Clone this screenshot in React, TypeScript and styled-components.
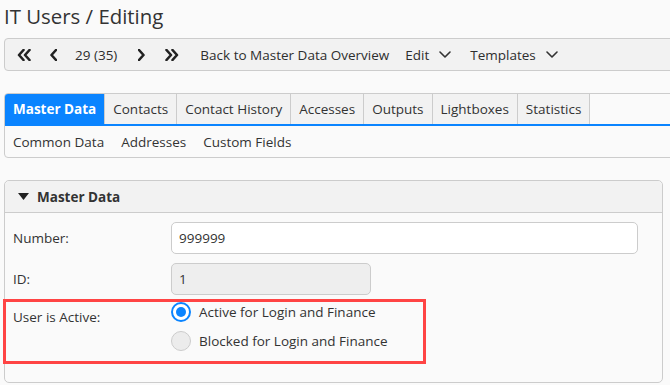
import styled, { createGlobalStyle } from "styled-components";

const GlobalStyle = createGlobalStyle`
	body {
		margin: 0;
		background: #fafafa;
		font-family: "Open Sans", "Noto Sans", sans-serif;
		color: #333;
		overflow: hidden;
	}
`;

const Page = styled.div`
	width: 670px;
	height: 385px;
	overflow: hidden;
	padding-left: 4px;
	box-sizing: border-box;
	font-size: 13.5px;
`;

const Title = styled.h1`
	margin: 0;
	height: 38px;
	font-size: 20.4px;
	font-weight: 400;
	line-height: 32px;
	color: #333;
`;

const Toolbar = styled.div`
	display: flex;
	align-items: center;
	height: 33px;
	box-sizing: border-box;
	margin-right: -12px;
	padding-left: 12px;
	background: #f2f2f2;
	border: 1px solid #ccc;
	border-radius: 4px;
`;

const ToolButton = styled.span<{ gap?: number }>`
	display: flex;
	align-items: center;
	gap: 10px;
	margin-right: ${(props) => props.gap ?? 16}px;
	white-space: nowrap;
	color: #2e2e2e;
`;

const TabBox = styled.div`
	margin-top: 22px;
	margin-right: -12px;
	border: 1px solid #ccc;
	border-radius: 4px;
`;

const TabRow = styled.div`
	display: flex;
	border-bottom: 2px solid #0a84ff;
`;

const Tab = styled.span<{ active?: boolean }>`
	height: 30px;
	line-height: 30px;
	padding: 0 8px;
	box-sizing: border-box;
	white-space: nowrap;
	background: ${(props) => (props.active ? "#0a84ff" : "#f2f2f2")};
	color: ${(props) => (props.active ? "#fff" : "#333")};
	font-weight: ${(props) => (props.active ? 700 : 400)};
	border-right: 1px solid #ccc;
	&:first-child {
		border-top-left-radius: 3px;
	}
`;

const SubTabRow = styled.div`
	display: flex;
	gap: 17px;
	height: 31px;
	align-items: center;
	padding-left: 8px;
`;

const Panel = styled.section`
	margin-top: 22px;
	margin-right: 7px;
	height: 203px;
	box-sizing: border-box;
	border: 1px solid #ccc;
	border-radius: 5px;
`;

const PanelHeader = styled.div`
	display: flex;
	align-items: center;
	gap: 8px;
	height: 31px;
	padding-left: 13px;
	background: #f2f2f2;
	border-bottom: 1px solid #ccc;
	border-radius: 5px 5px 0 0;
	font-weight: 700;
`;

const Form = styled.div`
	padding: 4px 24px 0 8px;
`;

const Row = styled.div<{ highlighted?: boolean }>`
	display: grid;
	grid-template-columns: 158px 1fr;
	align-items: center;
	min-height: 41px;
	${(props) =>
		props.highlighted &&
		`
		width: 423px;
		margin-left: -10px;
		padding: 0 0 10px 7px;
		border: 3px solid #ff4444;
		box-sizing: border-box;
		align-items: start;
	`}
`;

const Label = styled.span<{ top?: number }>`
	padding-top: ${(props) => props.top ?? 0}px;
`;

const Input = styled.div<{ disabled?: boolean; width?: number }>`
	height: 32px;
	box-sizing: border-box;
	width: ${(props) => (props.width ? `${props.width}px` : "100%")};
	padding-left: 7px;
	line-height: 30px;
	background: ${(props) => (props.disabled ? "#eee" : "#fff")};
	border: 1px solid #ccc;
	border-radius: 5px;
`;

const RadioGroup = styled.div`
	display: flex;
	flex-direction: column;
	gap: 9px;
`;

const RadioLine = styled.label`
	display: flex;
	align-items: center;
	gap: 8px;
	height: 20px;
`;

const Radio = styled.span<{ checked?: boolean }>`
	width: 20px;
	height: 20px;
	box-sizing: border-box;
	border-radius: 50%;
	border: ${(props) => (props.checked ? "2px solid #0a84ff" : "1px solid #ccc")};
	background: ${(props) => (props.checked ? "#fff" : "#ececec")};
	display: flex;
	align-items: center;
	justify-content: center;
	&::after {
		content: "";
		display: ${(props) => (props.checked ? "block" : "none")};
		width: 10px;
		height: 10px;
		border-radius: 50%;
		background: #0a84ff;
	}
`;

const Chevron = ({ dir, double }: { dir: "left" | "right"; double?: boolean }) => {
	const w = double ? 14 : 7;
	const paths =
		dir === "left"
			? double
				? ["M6.5 1 L2 6 L6.5 11", "M12.5 1 L8 6 L12.5 11"]
				: ["M6 1 L1.5 6 L6 11"]
			: double
				? ["M1.5 1 L6 6 L1.5 11", "M7.5 1 L12 6 L7.5 11"]
				: ["M1 1 L5.5 6 L1 11"];
	return (
		<svg width={w} height="12" viewBox={`0 0 ${w} 12`} fill="none" stroke="#222" strokeWidth="2.6" strokeLinecap="round" strokeLinejoin="round">
			{paths.map((d) => (
				<path key={d} d={d} />
			))}
		</svg>
	);
};

const Caret = () => (
	<svg width="12" height="7" viewBox="0 0 12 7" fill="none" stroke="#333" strokeWidth="1.6" strokeLinecap="round" strokeLinejoin="round">
		<path d="M1 1 L6 6 L11 1" />
	</svg>
);

const tabs = ["Master Data", "Contacts", "Contact History", "Accesses", "Outputs", "Lightboxes", "Statistics"];

export default function App() {
	return (
		<Page>
			<GlobalStyle />
			<Title>IT Users / Editing</Title>
			<Toolbar>
				<ToolButton gap={19}><Chevron dir="left" double /></ToolButton>
				<ToolButton gap={18}><Chevron dir="left" /></ToolButton>
				<ToolButton gap={21}>29 (35)</ToolButton>
				<ToolButton gap={20}><Chevron dir="right" /></ToolButton>
				<ToolButton gap={21}><Chevron dir="right" double /></ToolButton>
				<ToolButton gap={16}>Back to Master Data Overview</ToolButton>
				<ToolButton gap={19}>Edit <Caret /></ToolButton>
				<ToolButton>Templates <Caret /></ToolButton>
			</Toolbar>
			<TabBox>
				<TabRow>
					{tabs.map((tab, i) => (
						<Tab key={tab} active={i === 0}>{tab}</Tab>
					))}
				</TabRow>
				<SubTabRow>
					<span>Common Data</span>
					<span>Addresses</span>
					<span>Custom Fields</span>
				</SubTabRow>
			</TabBox>
			<Panel>
				<PanelHeader>
					<svg width="11" height="7" viewBox="0 0 11 7"><path d="M0 0 H11 L5.5 7 Z" fill="#222" /></svg>
					Master Data
				</PanelHeader>
				<Form>
					<Row>
						<Label>Number:</Label>
						<Input>999999</Input>
					</Row>
					<Row>
						<Label>ID:</Label>
						<Input disabled width={200}>1</Input>
					</Row>
					<Row highlighted>
						<Label top={6}>User is Active:</Label>
						<RadioGroup>
							<RadioLine><Radio checked />Active for Login and Finance</RadioLine>
							<RadioLine><Radio />Blocked for Login and Finance</RadioLine>
						</RadioGroup>
					</Row>
				</Form>
			</Panel>
		</Page>
	);
}
